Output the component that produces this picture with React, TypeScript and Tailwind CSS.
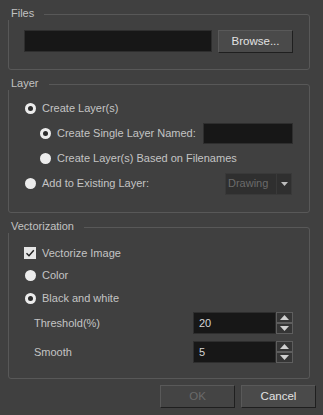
import { type ReactNode } from "react";

function Group({
  title,
  className,
  children,
}: {
  title: string;
  className: string;
  children: ReactNode;
}) {
  return (
    <div
      className={`relative ml-[8px] w-[302px] rounded-[3px] border border-[#585858] ${className}`}
    >
      <span className="absolute left-[-2px] top-[-8px] bg-[#404040] pl-[4px] pr-[10px] leading-[13px] text-[#c2c2c2]">
        {title}
      </span>
      {children}
    </div>
  );
}

function Radio({ checked }: { checked?: boolean }) {
  return (
    <span className="flex h-[11px] w-[11px] shrink-0 items-center justify-center rounded-full bg-[#ececec]">
      {checked && <span className="h-[5px] w-[5px] rounded-full bg-[#2c2c2c]" />}
    </span>
  );
}

function Checkbox() {
  return (
    <span className="flex h-[12px] w-[12px] shrink-0 items-center justify-center bg-[#e6e6e6]">
      <svg viewBox="0 0 12 12" className="h-[12px] w-[12px]" fill="none" stroke="#202020" strokeWidth="1.4" aria-hidden="true">
        <path d="M2.5 6.2 5 8.7 9.8 3.2" />
      </svg>
    </span>
  );
}

function Field({ className }: { className: string }) {
  return <div className={`border border-[#2e2e2e] bg-[#171717] ${className}`} />;
}

function Button({ label, disabled }: { label: string; disabled?: boolean }) {
  return (
    <button
      className={`flex h-[23px] w-[75px] items-center justify-center border-t border-l border-b border-r border-t-[#595959] border-l-[#595959] border-b-[#1f1f1f] border-r-[#1f1f1f] text-[11.5px] ${
        disabled ? "bg-[#444444] text-[#6a6a6a]" : "bg-[#4a4a4a] text-[#e2e2e2]"
      }`}
    >
      {label}
    </button>
  );
}

function Spin({ value }: { value: string }) {
  return (
    <div className="flex h-[22px] w-[100px]">
      <div className="flex flex-1 items-center border border-[#2e2e2e] bg-[#171717] pl-[5px] text-[#d4d4d4]">
        {value}
      </div>
      <div className="flex w-[17px] flex-col">
        <span className="flex h-[11px] items-center justify-center border border-[#5e5e5e] bg-[#353535]">
          <svg viewBox="0 0 9 5" className="h-[5px] w-[9px]" aria-hidden="true">
            <path d="M0 5 4.5 0 9 5z" fill="#d0d0d0" />
          </svg>
        </span>
        <span className="flex h-[11px] items-center justify-center border border-[#5e5e5e] bg-[#353535]">
          <svg viewBox="0 0 9 5" className="h-[5px] w-[9px]" aria-hidden="true">
            <path d="M0 0 4.5 5 9 0z" fill="#d0d0d0" />
          </svg>
        </span>
      </div>
    </div>
  );
}

export default function App() {
  return (
    <div
      className="h-[415px] w-[323px] bg-[#404040] pt-[14px] text-[11px] text-[#c4c4c4]"
      style={{ fontFamily: '"Liberation Sans", Arial, sans-serif' }}
    >
      <Group title="Files" className="h-[56px]">
        <div className="flex gap-[6px] pl-[15px] pt-[15px]">
          <Field className="h-[22px] w-[188px]" />
          <Button label="Browse..." />
        </div>
      </Group>

      <Group title="Layer" className="mt-[14px] h-[129px]">
        <div className="flex flex-col pr-[16px] pt-[11px]">
          <div className="flex h-[25px] items-center gap-[6px] pl-[16px]">
            <Radio checked />
            <span>Create Layer(s)</span>
          </div>
          <div className="flex h-[25px] items-center gap-[6px] pl-[31px]">
            <Radio checked />
            <span className="flex-1">Create Single Layer Named:</span>
            <Field className="h-[21px] w-[90px]" />
          </div>
          <div className="flex h-[25px] items-center gap-[6px] pl-[31px]">
            <Radio />
            <span>Create Layer(s) Based on Filenames</span>
          </div>
          <div className="flex h-[25px] items-center gap-[6px] pl-[16px]">
            <Radio />
            <span className="flex-1">Add to Existing Layer:</span>
            <div className="mr-[1px] flex h-[22px] w-[67px] bg-[#393939] p-[1px]">
              <span className="flex flex-1 items-center bg-[#2f2f2f] pl-[2px] text-[#6b6b6b]">
                Drawing
              </span>
              <span className="ml-[1px] flex w-[14px] items-center justify-center bg-[#2f2f2f]">
                <svg viewBox="0 0 7 4" className="h-[4px] w-[7px]" aria-hidden="true">
                  <path d="M0 0 3.5 4 7 0z" fill="#bdbdbd" />
                </svg>
              </span>
            </div>
          </div>
        </div>
      </Group>

      <Group title="Vectorization" className="mt-[14px] h-[152px]">
        <div className="flex flex-col pr-[16px] pt-[14px]">
          <div className="flex h-[22px] items-center gap-[6px] pl-[15px]">
            <Checkbox />
            <span>Vectorize Image</span>
          </div>
          <div className="flex h-[23px] items-center gap-[6px] pl-[16px]">
            <Radio />
            <span>Color</span>
          </div>
          <div className="flex h-[23px] items-center gap-[6px] pl-[16px]">
            <Radio checked />
            <span>Black and white</span>
          </div>
          <div className="mt-[2px] flex h-[22px] items-center justify-between pl-[25px]">
            <span>Threshold(%)</span>
            <Spin value="20" />
          </div>
          <div className="mt-[7px] flex h-[22px] items-center justify-between pl-[25px]">
            <span>Smooth</span>
            <Spin value="5" />
          </div>
        </div>
      </Group>

      <div className="mt-[6px] flex justify-end gap-[6px] pr-[7px]">
        <Button label="OK" disabled />
        <Button label="Cancel" />
      </div>
    </div>
  );
}
